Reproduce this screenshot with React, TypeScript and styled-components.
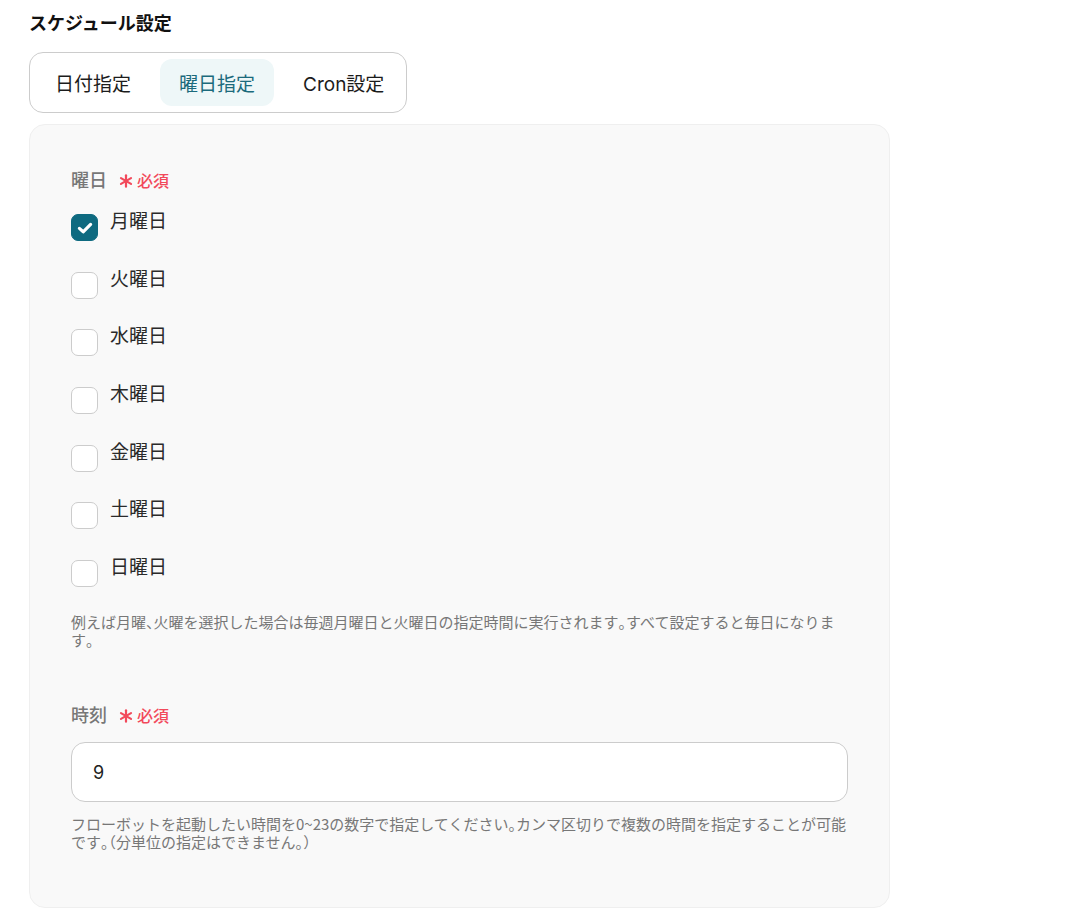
import React, { useState } from 'react';
import styled, { createGlobalStyle } from 'styled-components';

const GlobalStyle = createGlobalStyle`
    body {
        margin: 0;
        background: #ffffff;
        font-family: "Inter", "Noto Sans CJK JP", sans-serif;
        color: #222222;
    }
`;

const Page = styled.div`
    padding: 12px 29px 0;
    width: 861px;
`;

const Title = styled.h2`
    margin: 0 0 16px;
    font-size: 18px;
    line-height: 24px;
    font-weight: 700;
    color: #111111;
`;

const TabGroup = styled.div`
    display: inline-flex;
    gap: 10px;
    padding: 6px 3px 6px 6px;
    border: 1px solid #cccccc;
    border-radius: 14px;
    background: #ffffff;
`;

const Tab = styled.button<{ $active?: boolean }>`
    height: 47px;
    padding: 0 19px;
    border: none;
    border-radius: 12px;
    font-family: inherit;
    font-size: 19px;
    background: ${p => (p.$active ? '#eef7f8' : 'transparent')};
    color: ${p => (p.$active ? '#1b6a7c' : '#1c1c1c')};
    cursor: pointer;
`;

const Panel = styled.div`
    margin-top: 11px;
    padding: 44px 41px 56px;
    background: #f9f9f9;
    border: 1px solid #efefef;
    border-radius: 16px;
`;

const FieldLabel = styled.div<{ $top?: number }>`
    display: flex;
    align-items: center;
    gap: 12px;
    margin-top: ${p => p.$top ?? 0}px;
    font-size: 18px;
    line-height: 24px;
    font-weight: 500;
    color: #777777;
`;

const Required = styled.span`
    display: inline-flex;
    align-items: center;
    gap: 4px;
    font-size: 16px;
    font-weight: 500;
    color: #f2495b;
`;

const OptionList = styled.div`
    display: flex;
    flex-direction: column;
    gap: 30.7px;
    margin-top: 21px;
`;

const OptionRow = styled.label`
    display: flex;
    align-items: flex-start;
    gap: 12px;
    cursor: pointer;
`;

const Box = styled.span<{ $checked: boolean }>`
    flex: none;
    width: 27px;
    height: 27px;
    box-sizing: border-box;
    border-radius: 7px;
    border: 1px solid ${p => (p.$checked ? '#0e6a80' : '#cccccc')};
    background: ${p => (p.$checked ? '#0e6a80' : '#ffffff')};
    display: flex;
    align-items: center;
    justify-content: center;
`;

const OptionText = styled.span`
    font-size: 19px;
    line-height: 19px;
    margin-top: -2px;
    color: #2a2a2a;
`;

const Help = styled.p<{ $top: number }>`
    margin: ${p => p.$top}px 0 0;
    font-family: "Noto Sans CJK JP", sans-serif;
    font-size: 15px;
    line-height: 18px;
    color: #777777;
`;

// full-width punctuation drawn at half width, as in the product copy
const Tight = styled.span`
    font-feature-settings: "halt";
`;

const TimeInput = styled.input`
    display: block;
    box-sizing: border-box;
    width: 100%;
    height: 60px;
    margin-top: 14px;
    padding: 0 21px;
    border: 1px solid #cccccc;
    border-radius: 14px;
    background: #ffffff;
    font-family: inherit;
    font-size: 18px;
    color: #222222;
    outline: none;
`;

const Check = () => (
    <svg width="18" height="18" viewBox="0 0 18 18">
        <path d="M3.4 9.4 L7.2 12.8 L14.6 5.4" fill="none" stroke="#ffffff" strokeWidth="3.2" strokeLinecap="round" strokeLinejoin="round" />
    </svg>
);

const Star = () => (
    <svg width="14" height="14" viewBox="0 0 14 14">
        <g stroke="#f2495b" strokeWidth="2.2" strokeLinecap="round">
            <line x1="7" y1="1.3" x2="7" y2="12.7" />
            <line x1="2" y1="4.1" x2="12" y2="9.9" />
            <line x1="2" y1="9.9" x2="12" y2="4.1" />
        </g>
    </svg>
);

const punct = /([、。（）])/;

const HelpText: React.FC<{ text: string; top: number }> = ({ text, top }) => (
    <Help $top={top}>
        {text.split(punct).map((part, i) =>
            punct.test(part) ? <Tight key={i}>{part}</Tight> : part
        )}
    </Help>
);

const tabs = ['日付指定', '曜日指定', 'Cron設定'];
const days = ['月曜日', '火曜日', '水曜日', '木曜日', '金曜日', '土曜日', '日曜日'];

const App: React.FC = () => {
    const [tab, setTab] = useState(1);
    const [checked, setChecked] = useState<boolean[]>([true, false, false, false, false, false, false]);
    const [hour, setHour] = useState('9');

    const toggle = (i: number) => setChecked(c => c.map((v, j) => (j === i ? !v : v)));

    return (
        <Page>
            <GlobalStyle />
            <Title>スケジュール設定</Title>
            <TabGroup>
                {tabs.map((t, i) => (
                    <Tab key={t} $active={tab === i} onClick={() => setTab(i)}>{t}</Tab>
                ))}
            </TabGroup>
            <Panel>
                <FieldLabel>
                    曜日
                    <Required><Star />必須</Required>
                </FieldLabel>
                <OptionList>
                    {days.map((d, i) => (
                        <OptionRow key={d} onClick={() => toggle(i)}>
                            <Box $checked={checked[i]}>{checked[i] && <Check />}</Box>
                            <OptionText>{d}</OptionText>
                        </OptionRow>
                    ))}
                </OptionList>
                <HelpText
                    top={26}
                    text="例えば月曜、火曜を選択した場合は毎週月曜日と火曜日の指定時間に実行されます。すべて設定すると毎日になります。"
                />
                <FieldLabel $top={55}>
                    時刻
                    <Required><Star />必須</Required>
                </FieldLabel>
                <TimeInput value={hour} onChange={e => setHour(e.target.value)} />
                <HelpText
                    top={13}
                    text="フローボットを起動したい時間を0~23の数字で指定してください。カンマ区切りで複数の時間を指定することが可能です。（分単位の指定はできません。）"
                />
            </Panel>
        </Page>
    );
};

export default App;
